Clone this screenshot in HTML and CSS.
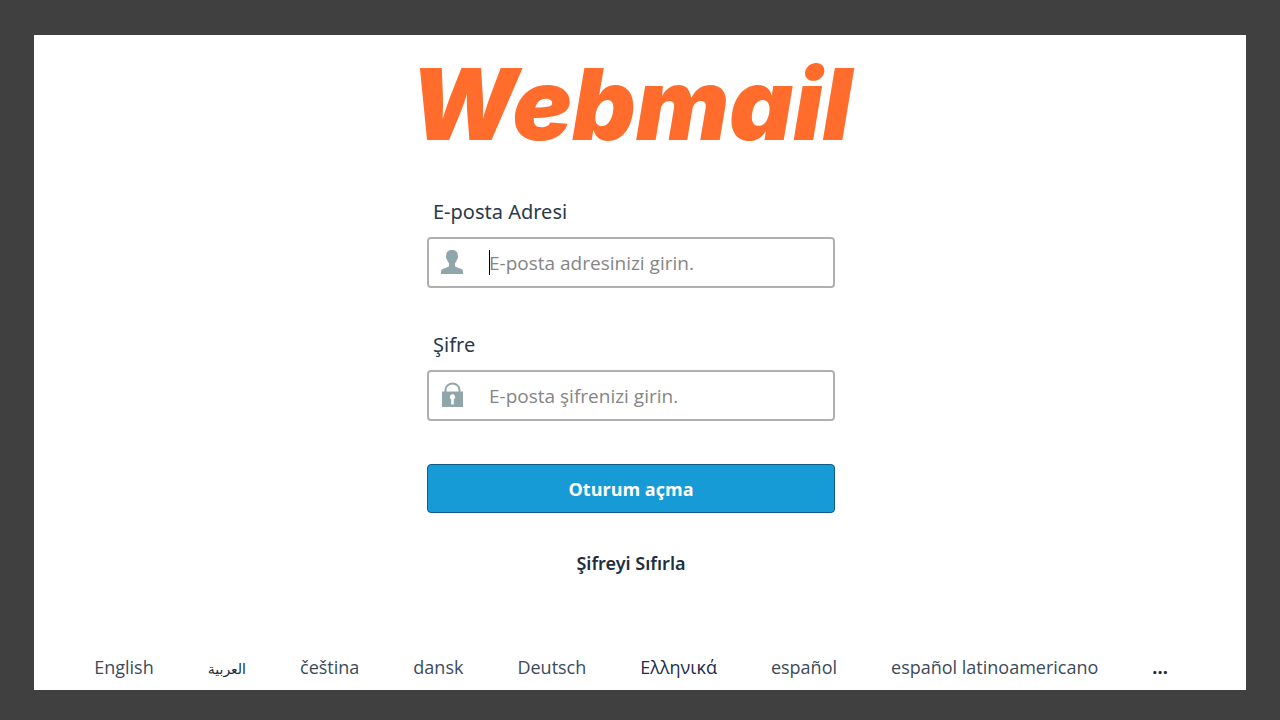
FILE: index.html
```html
<!DOCTYPE html>
<html lang="tr">
<head>
    <meta charset="UTF-8">
    <title>Webmail</title>
    <link rel="stylesheet" href="styles.css">
</head>
<body>
<div class="page">
    <h1 class="logo">Webmail</h1>
    <form class="login">
        <label for="user">E-posta Adresi</label>
        <div class="field">
            <svg class="icon" viewBox="0 0 24 26" aria-hidden="true">
                <path d="M12 1C8.300 1 6 3 6.300 6.500C5.600 6.700 5.900 9.800 6.900 10.300C7.300 12.200 8.300 13.600 9 14.300V17.200C8 19 1 18.700 1 22.500V25H23V22.500C23 18.700 16 19 15 17.200V14.300C15.700 13.600 16.700 12.200 17.100 10.300C18.100 9.800 18.400 6.700 17.700 6.500C18 3 15.700 1 12 1Z"/>
            </svg>
            <input id="user" type="text" placeholder="E-posta adresinizi girin.">
            <span class="caret"></span>
        </div>
        <label for="pass">Şifre</label>
        <div class="field">
            <svg class="icon" viewBox="0 0 24 26" aria-hidden="true">
                <path fill-rule="evenodd" d="M2 9.500H4.500V8A8 7.500 0 0 1 20.500 8V9.500H23V25H2ZM6.500 9.500H18.500V8A6 5.500 0 0 0 6.500 8ZM12.500 12A3 3 0 0 0 11.200 17.500V22.500H13.800V17.500A3 3 0 0 0 12.500 12Z"/>
            </svg>
            <input id="pass" type="password" placeholder="E-posta şifrenizi girin.">
        </div>
        <button type="submit">Oturum açma</button>
        <a class="reset" href="#">Şifreyi Sıfırla</a>
    </form>
    <ul class="locales">
        <li><a href="#">English</a></li>
        <li><a class="arabic" href="#" lang="ar">العربية</a></li>
        <li><a href="#">čeština</a></li>
        <li><a href="#">dansk</a></li>
        <li><a href="#">Deutsch</a></li>
        <li><a class="greek" href="#">Ελληνικά</a></li>
        <li><a href="#">español</a></li>
        <li><a href="#">español latinoamericano</a></li>
        <li><a class="more" href="#">...</a></li>
    </ul>
</div>
</body>
</html>
```
FILE: styles.css
```css
* {
    margin: 0;
    padding: 0;
    box-sizing: border-box;
}

body {
    min-height: 100vh;
    padding: 35px 34px 30px;
    display: flex;
    background-color: #404040;
    color: #293a4a;
    font-family: "Open Sans", "Noto Sans", sans-serif;
    font-size: 18px;
}

.page {
    flex: 1;
    padding: 19px 18px 7px 0;
    display: flex;
    flex-direction: column;
    align-items: center;
    background-color: #fff;
}

.logo {
    line-height: 100px;
    font-family: Inter, "Open Sans", sans-serif;
    font-size: 99px;
    font-weight: 900;
    font-style: italic;
    color: #ff6c2c;
}

.login {
    width: 100%;
    max-width: 408px;
    margin-top: 44px;
    display: flex;
    flex-direction: column;
}

.login label {
    padding-left: 6px;
    line-height: 28px;
    margin-bottom: 11px;
    font-family: "Noto Sans", sans-serif;
    font-size: 20px;
}

.field {
    position: relative;
    margin-bottom: 43px;
}

.field input {
    display: block;
    width: 100%;
    height: 51px;
    padding: 0 12px 0 60px;
    border: 2px solid #b0b0b0;
    border-radius: 4px;
    outline: none;
    font-family: inherit;
    font-size: 19px;
    color: #293a4a;
}

.field input::placeholder {
    color: #858585;
    opacity: 1;
}

.icon {
    position: absolute;
    left: 13px;
    top: 12px;
    width: 24px;
    height: 26px;
    fill: #8fa7ab;
}

.caret {
    position: absolute;
    left: 62px;
    top: 13px;
    width: 1px;
    height: 25px;
    background-color: #000;
}

.login button {
    height: 49px;
    border: 1px solid #0e5d85;
    border-radius: 4px;
    background-color: #179bd7;
    color: #fff;
    font-family: inherit;
    font-size: 18px;
    font-weight: 700;
    cursor: pointer;
}

.reset {
    margin-top: 36px;
    line-height: 28px;
    font-family: "Noto Sans", sans-serif;
    font-size: 18px;
    font-weight: 600;
    color: #1f2f3d;
    text-align: center;
    text-decoration: none;
}

.locales {
    margin-top: auto;
    display: flex;
    gap: 54px;
    list-style: none;
    line-height: 28px;
}

.locales a {
    color: #3b4b59;
    text-decoration: none;
}

.locales .arabic {
    font-family: "DejaVu Sans", sans-serif;
    font-size: 14px;
    color: #1c2b3a;
}

.locales .greek {
    color: #1c2b4a;
}

.locales .more {
    font-weight: 700;
    color: #1c2b3a;
}
```
